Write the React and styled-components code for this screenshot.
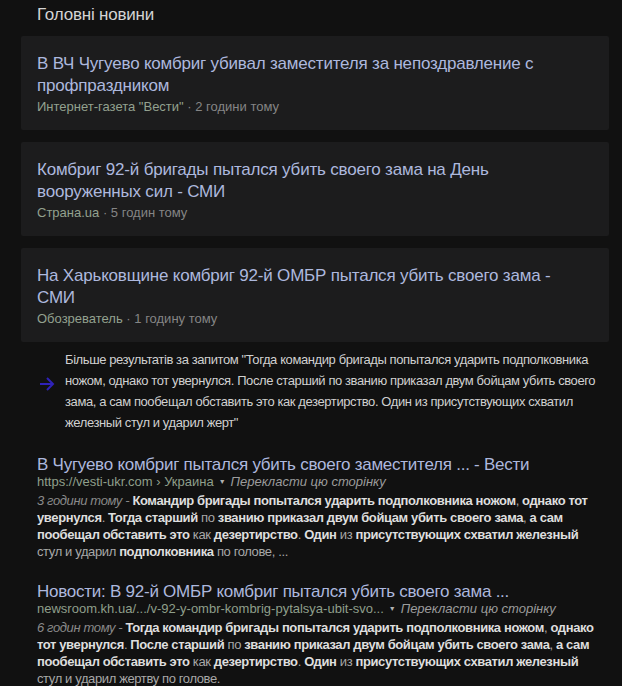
import React from 'react';
import styled, { createGlobalStyle } from 'styled-components';

const topStories = [
  {
    title: 'В ВЧ Чугуево комбриг убивал заместителя за непоздравление с профпраздником',
    source: 'Интернет-газета "Вести"',
    time: '2 години тому',
  },
  {
    title: 'Комбриг 92-й бригады пытался убить своего зама на День вооруженных сил - СМИ',
    source: 'Страна.ua',
    time: '5 годин тому',
  },
  {
    title: 'На Харьковщине комбриг 92-й ОМБР пытался убить своего зама - СМИ',
    source: 'Обозреватель',
    time: '1 годину тому',
  },
];

// b: true = жирний фрагмент сніпета
const results = [
  {
    title: 'В Чугуево комбриг пытался убить своего заместителя ... - Вести',
    url: 'https://vesti-ukr.com › Украина',
    time: '3 години тому',
    snippet: [
      { b: true, t: 'Командир бригады попытался ударить подполковника ножом' },
      { t: ', ' },
      { b: true, t: 'однако тот увернулся' },
      { t: '. ' },
      { b: true, t: 'Тогда старший' },
      { t: ' по ' },
      { b: true, t: 'званию приказал двум бойцам убить своего зама' },
      { t: ', ' },
      { b: true, t: 'а сам пообещал обставить это' },
      { t: ' как ' },
      { b: true, t: 'дезертирство' },
      { t: '. ' },
      { b: true, t: 'Один' },
      { t: ' из ' },
      { b: true, t: 'присутствующих схватил железный' },
      { t: ' стул и ударил ' },
      { b: true, t: 'подполковника' },
      { t: ' по голове, ...' },
    ],
  },
  {
    title: 'Новости: В 92-й ОМБР комбриг пытался убить своего зама ...',
    url: 'newsroom.kh.ua/.../v-92-y-ombr-kombrig-pytalsya-ubit-svo...',
    time: '6 годин тому',
    snippet: [
      { b: true, t: 'Тогда командир бригады попытался ударить подполковника ножом' },
      { t: ', ' },
      { b: true, t: 'однако тот увернулся' },
      { t: '. ' },
      { b: true, t: 'После старший' },
      { t: ' по ' },
      { b: true, t: 'званию приказал двум бойцам убить своего зама' },
      { t: ', ' },
      { b: true, t: 'а сам пообещал обставить это' },
      { t: ' как ' },
      { b: true, t: 'дезертирство' },
      { t: '. ' },
      { b: true, t: 'Один' },
      { t: ' из ' },
      { b: true, t: 'присутствующих схватил железный' },
      { t: ' стул и ударил жертву по голове.' },
    ],
  },
];

function App() {
  return (
    <>
      <GlobalStyle />
      <Page>
        <SectionTitle>Головні новини</SectionTitle>

        <Cards>
          {topStories.map((story) => (
            <Card key={story.title}>
              <CardTitle>{story.title}</CardTitle>
              <CardMeta>
                <Source>{story.source}</Source> · {story.time}
              </CardMeta>
            </Card>
          ))}
        </Cards>

        <MoreRow>
          <ArrowIcon viewBox="0 0 16 16">
            <path d="M1 8h13M8 2l6 6-6 6" fill="none" stroke="currentColor" strokeWidth="2" />
          </ArrowIcon>
          <MoreText>
            Більше результатів за запитом "Тогда командир бригады попытался ударить подполковника
            ножом, однако тот увернулся. После старший по званию приказал двум бойцам убить своего
            зама, а сам пообещал обставить это как дезертирство. Один из присутствующих схватил
            железный стул и ударил жерт"
          </MoreText>
        </MoreRow>

        <Results>
          {results.map((r) => (
            <Result key={r.title}>
              <ResultTitle>{r.title}</ResultTitle>
              <UrlLine>
                <Url>{r.url}</Url>
                <Caret>▼</Caret>
                <Translate>Перекласти цю сторінку</Translate>
              </UrlLine>
              <Snippet>
                <Date>{r.time} - </Date>
                {r.snippet.map((part, i) =>
                  part.b ? <b key={i}>{part.t}</b> : <span key={i}>{part.t}</span>
                )}
              </Snippet>
            </Result>
          ))}
        </Results>
      </Page>
    </>
  );
}

// CSS ----------------------------------------------------------------

const GlobalStyle = createGlobalStyle`
  html, body {
    margin: 0;
    background: #111111;
  }
  body {
    font-family: "Liberation Sans", Arial, sans-serif;
    color: #cfcfcf;
  }
`;

const Page = styled.div`
  width: 622px;
  height: 686px;
  overflow: hidden;
  padding: 0 13px 0 21px;
  box-sizing: border-box;
`;

const SectionTitle = styled.h3`
  margin: 0;
  padding: 3px 0 0 16px;
  height: 36px;
  box-sizing: border-box;
  font-size: 17px;
  line-height: 24px;
  letter-spacing: -0.2px;
  font-weight: normal;
  color: #d4d4d4;
`;

const Cards = styled.div`
  display: flex;
  flex-direction: column;
  gap: 12px;
`;

const Card = styled.div`
  background: #1c1c1d;
  border-radius: 2px;
  padding: 17px 30px 13px 16px;
  height: 94px;
  box-sizing: border-box;
`;

const CardTitle = styled.div`
  font-size: 17px;
  line-height: 22px;
  letter-spacing: -0.2px;
  color: #adb8de;
`;

const CardMeta = styled.div`
  font-size: 13px;
  line-height: 20px;
  color: #858585;
`;

const Source = styled.span`
  color: #93a18f;
`;

const MoreRow = styled.div`
  display: flex;
  align-items: center;
  gap: 10px;
  padding: 7px 0 0 18px;
`;

const ArrowIcon = styled.svg`
  width: 16px;
  height: 16px;
  margin-bottom: 14px;
  flex: none;
  color: #2f22b8;
`;

const MoreText = styled.div`
  width: 534px;
  font-size: 13px;
  line-height: 21px;
  letter-spacing: -0.4px;
  color: #d0d0d0;
`;

const Results = styled.div`
  display: flex;
  flex-direction: column;
  gap: 23px;
  padding: 23px 9px 0 16px;
`;

const Result = styled.div`
  display: flex;
  flex-direction: column;
`;

const ResultTitle = styled.div`
  font-size: 17px;
  line-height: 18px;
  letter-spacing: -0.25px;
  color: #adb8de;
`;

const UrlLine = styled.div`
  display: flex;
  align-items: baseline;
  gap: 5px;
  font-size: 13px;
  line-height: 16px;
  white-space: nowrap;
`;

const Url = styled.span`
  color: #8f9f8b;
`;

const Caret = styled.span`
  font-size: 7px;
  color: #b0b0b0;
  position: relative;
  top: -2px;
`;

const Translate = styled.span`
  font-style: italic;
  color: #9c9c9c;
`;

const Snippet = styled.div`
  font-size: 13px;
  line-height: 17px;
  letter-spacing: -0.38px;
  color: #a8a8a8;

  b {
    color: #dedede;
    font-weight: bold;
  }
`;

const Date = styled.span`
  font-style: italic;
  color: #8a8a8a;
`;

export default App;
